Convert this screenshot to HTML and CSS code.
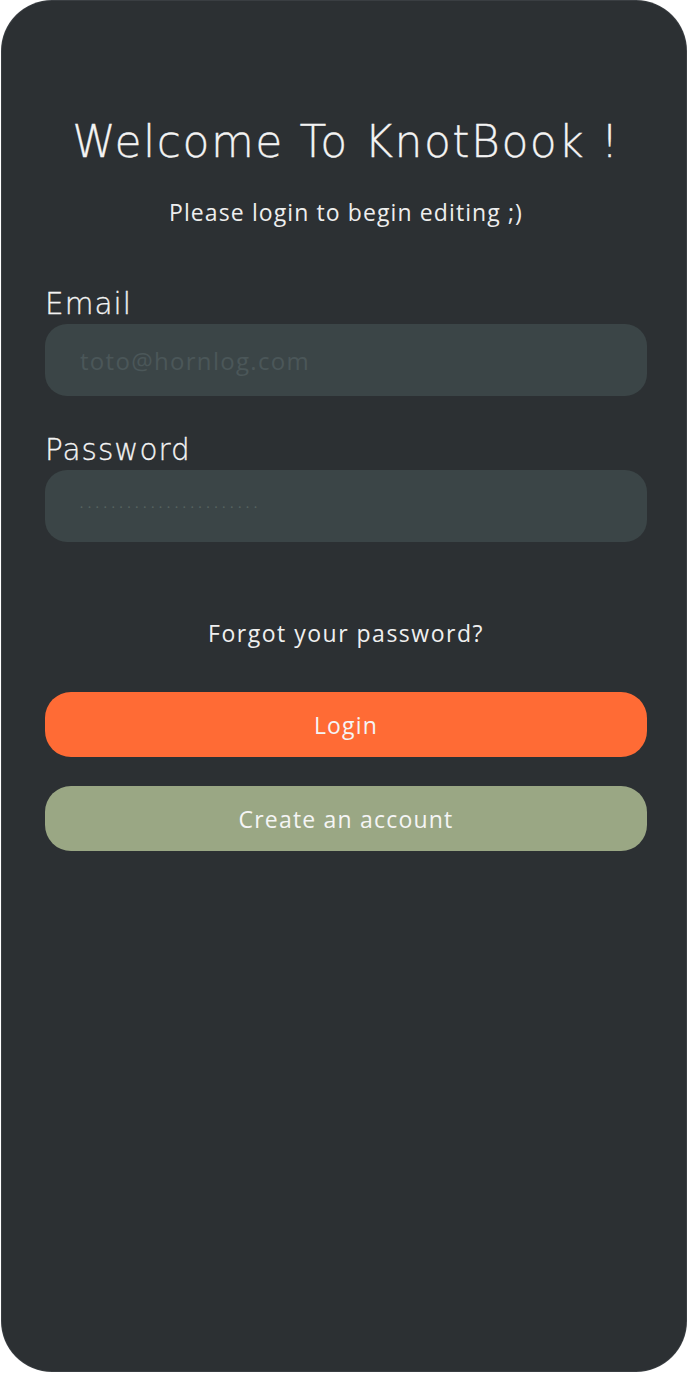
FILE: index.html
```html
<!DOCTYPE html>
<html>
<head>
<meta charset="utf-8">
<link rel="stylesheet" href="styles.css">
</head>
<body>
<div class="phone">
  <h1 class="title">Welcome To KnotBook !</h1>
  <p class="subtitle">Please login to begin editing ;)</p>
  <form class="form">
    <label class="field">
      <span class="label">Email</span>
      <input class="input" type="text" placeholder="toto@hornlog.com">
    </label>
    <label class="field">
      <span class="label">Password</span>
      <span class="input"><span class="dots">•••••••••••••••••••••••</span></span>
    </label>
    <a class="forgot">Forgot your password?</a>
    <button type="button" class="btn btn-login">Login</button>
    <button type="button" class="btn btn-create">Create an account</button>
  </form>
</div>
</body>
</html>
```

FILE: styles.css
```css
html, body {
  margin: 0;
  padding: 0;
  background: #ffffff;
}
body {
  width: 688px;
  height: 1373px;
  padding: 1px 2px 2px 2px;
  box-sizing: border-box;
}
.phone {
  height: 1370px;
  background: #2c3033;
  border-radius: 50px;
  box-shadow: 0 0 0 1px #3a3e42;
  box-sizing: border-box;
  padding: 111px 39px 0 43px;
  display: flex;
  flex-direction: column;
  font-family: "Open Sans", "Noto Sans", sans-serif;
  color: #f2f2f2;
}
.title {
  margin: 0;
  text-align: center;
  font-family: "DejaVu Sans", sans-serif;
  font-weight: 200;
  font-size: 44px;
  line-height: 60px;
  letter-spacing: 1.5px;
  color: #f4f4f4;
  -webkit-text-stroke: 0.3px #f4f4f4;
}
.subtitle {
  margin: 25px 0 0 0;
  text-align: center;
  font-size: 23px;
  line-height: 30px;
  letter-spacing: 1.1px;
  color: #eeeeee;
}
.form {
  display: flex;
  flex-direction: column;
  margin-top: 59px;
}
.field {
  display: flex;
  flex-direction: column;
  margin-bottom: 36px;
}
.label {
  font-family: "DejaVu Sans", sans-serif;
  font-weight: 200;
  font-size: 29.5px;
  line-height: 36px;
  letter-spacing: 1px;
  color: #f4f4f4;
  -webkit-text-stroke: 0.3px #f4f4f4;
  margin-bottom: 2px;
}
.input {
  height: 72px;
  border: none;
  outline: none;
  border-radius: 22px;
  background: #3b4547;
  padding: 0 0 0 35px;
  font-family: "Open Sans", sans-serif;
  font-size: 24px;
  letter-spacing: 1.3px;
  color: #4d5a5c;
  box-sizing: border-box;
  display: flex;
  align-items: center;
}
.input::placeholder {
  color: #4b5759;
}
.dots {
  font-size: 8px;
  letter-spacing: 4.9px;
  color: #56625f;
}
.forgot {
  align-self: center;
  margin-top: 40px;
  font-size: 23px;
  line-height: 30px;
  letter-spacing: 1.5px;
  color: #efefef;
}
.btn {
  height: 65px;
  border: none;
  border-radius: 26px;
  font-family: "Open Sans", sans-serif;
  font-size: 23px;
  letter-spacing: 1.2px;
  color: #f5f5f5;
  padding: 0;
}
.btn-login {
  margin-top: 44px;
  background: #ff6b35;
}
.btn-create {
  margin-top: 29px;
  background: #9aa784;
}
```
